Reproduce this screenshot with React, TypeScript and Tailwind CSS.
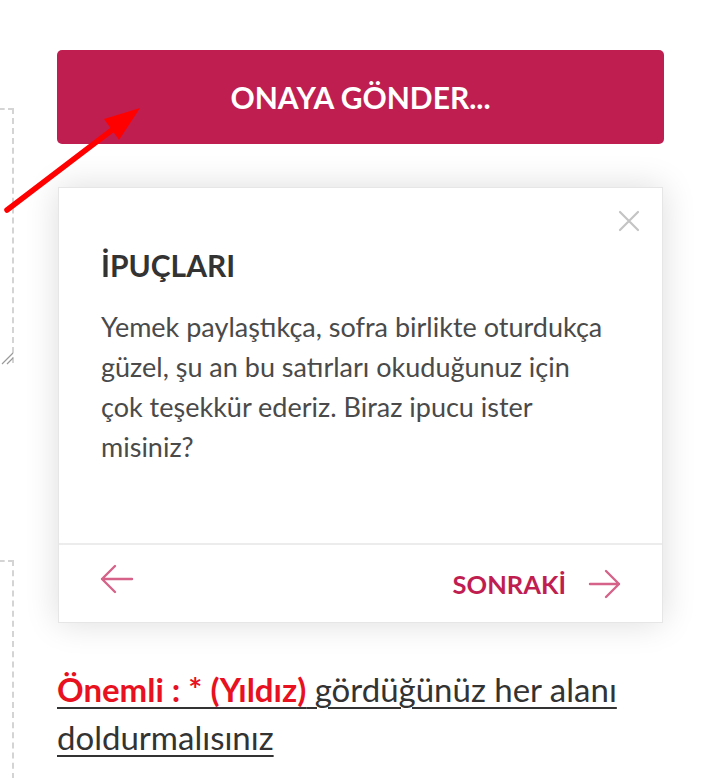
import React from "react";

function ArrowLeft() {
  return (
    <svg width="36" height="32" viewBox="0 0 36 32" fill="none" stroke="#d6628a" strokeWidth="2.4" strokeLinecap="round" strokeLinejoin="round">
      <path d="M33 16H3M16 3L3 16l13 13" />
    </svg>
  );
}

function ArrowRight() {
  return (
    <svg width="34" height="32" viewBox="0 0 34 32" fill="none" stroke="#d6628a" strokeWidth="2.4" strokeLinecap="round" strokeLinejoin="round">
      <path d="M2 16h29M18 3l13 13-13 13" />
    </svg>
  );
}

export default function App() {
  return (
    <div
      className="relative flex h-[778px] w-[728px] overflow-hidden bg-white"
      style={{ fontFamily: "Lato, 'Noto Sans', sans-serif" }}
    >
      {/* left column with the cut-off dashed fields */}
      <div className="flex w-[57px] shrink-0 flex-col">
        <div className="relative ml-[-20px] mt-[108px] h-[255px] w-[34px] shrink-0 border-r-2 border-t-2 border-dashed border-[#d4d4d4]">
          <svg className="absolute bottom-[-2px] right-[-2px]" width="14" height="14" viewBox="0 0 14 14" stroke="#9a9a9a" strokeWidth="1.2">
            <path d="M2 13L13 2M7 13L13 7" />
          </svg>
        </div>
        <div className="ml-[-20px] mt-[197px] h-[300px] w-[34px] shrink-0 border-r-2 border-t-2 border-dashed border-[#d4d4d4]" />
      </div>

      {/* main column */}
      <div className="flex w-[607px] shrink-0 flex-col pt-[50px]">
        <button className="flex h-[94px] w-full shrink-0 items-center justify-center rounded-[5px] bg-[#bf1e51] text-[30px] font-bold text-white">
          ONAYA GÖNDER...
        </button>

        <div className="relative ml-px mt-[43px] w-[605px] shrink-0 border border-[#e6e6e6] bg-white shadow-[0_0_32px_rgba(0,0,0,0.14)]">
          <button className="absolute right-[22px] top-[22px] text-[#c4c4c4]">
            <svg width="22" height="22" viewBox="0 0 22 22" stroke="currentColor" strokeWidth="2.2" strokeLinecap="round">
              <path d="M2 2l18 18M20 2L2 20" />
            </svg>
          </button>
          <div className="px-[42px] pb-[76px] pt-[58px]">
            <h2 className="text-[30px] font-bold leading-[38px] text-[#333]">İPUÇLARI</h2>
            <p className="mt-[23px] text-[27px] leading-[40px] text-[#4a4a4a]">
              Yemek paylaştıkça, sofra birlikte oturdukça
              <br />
              güzel, şu an bu satırları okuduğunuz için
              <br />
              çok teşekkür ederiz. Biraz ipucu ister
              <br />
              misiniz?
            </p>
          </div>
          <div className="flex h-[79px] items-start justify-between border-t-2 border-[#ececec] pl-[40px] pr-[40px]">
            <div className="mt-[18px]">
              <ArrowLeft />
            </div>
            <div className="mt-[20px] flex items-center gap-[22px]">
              <span className="text-[25.5px] font-bold text-[#c01e51]">SONRAKİ</span>
              <ArrowRight />
            </div>
          </div>
        </div>

        <p className="mt-[42px] text-[33px] leading-[48px] text-[#333] underline decoration-[1.5px] underline-offset-[5px]">
          <span className="font-bold text-[#e8111f]">Önemli : * (Yıldız)</span> gördüğünüz her alanı doldurmalısınız
        </p>
      </div>

      {/* red annotation arrow */}
      <svg className="pointer-events-none absolute left-0 top-0" width="160" height="230" viewBox="0 0 160 230">
        <path d="M7 210L112 130" stroke="#ff0000" strokeWidth="5.5" strokeLinecap="round" />
        <path d="M140 108L104 119L119 140Z" fill="#ff0000" />
      </svg>
    </div>
  );
}
